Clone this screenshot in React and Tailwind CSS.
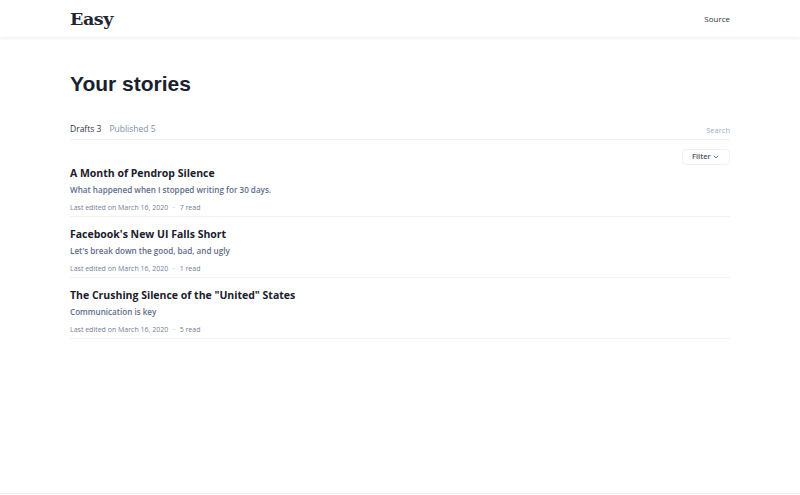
import { ChevronDown } from "lucide-react";

const stories = [
  {
    title: "A Month of Pendrop Silence",
    sub: "What happened when I stopped writing for 30 days.",
    read: "7 read",
  },
  {
    title: "Facebook's New UI Falls Short",
    sub: "Let's break down the good, bad, and ugly",
    read: "1 read",
  },
  {
    title: 'The Crushing Silence of the "United" States',
    sub: "Communication is key",
    read: "5 read",
  },
];

export default function App() {
  return (
    <div className="min-h-screen bg-white text-[#1a202c] flex flex-col font-['Open_Sans',sans-serif]">
      <header className="h-[37px] bg-white shadow-[0_1px_4px_rgba(0,0,0,0.08)]">
        <div className="max-w-[660px] mx-auto h-full flex items-center justify-between">
          <span className="font-['DejaVu_Serif',serif] font-bold text-[17.5px] tracking-tight text-[#1f2533] mt-[2px]">
            Easy
          </span>
          <a className="text-[8px] text-[#2d3748]">Source</a>
        </div>
      </header>

      <main className="flex-1 max-w-[660px] w-full mx-auto">
        <h1 className="mt-[34px] font-['Liberation_Sans',sans-serif] font-bold text-[21px] leading-[26px] text-[#1a202c]">
          Your stories
        </h1>

        <div className="mt-[26px] flex items-end justify-between border-b border-[#f2f2f2] pb-[3px]">
          <div className="flex gap-[8px] text-[8.5px]">
            <span className="text-[#2d3748]">Drafts 3</span>
            <span className="text-[#8090a8]">Published 5</span>
          </div>
          <span className="text-[7.5px] text-[#a0aec0]">Search</span>
        </div>

        <div className="flex justify-end mt-[9px]">
          <button className="h-[16px] w-[48px] px-[9px] flex items-center justify-between border border-[#edf2f7] rounded text-[7.5px] font-semibold text-[#4a5568]">
            Filter
            <ChevronDown size={8} strokeWidth={2.5} />
          </button>
        </div>

        <div className="-mt-[9px]">
          {stories.map((s) => (
            <div key={s.title} className="border-b border-[#f2f2f2] pt-[9px] pb-[3px]">
              <div className="text-[10.5px] font-bold leading-[16px] text-[#1a202c]">{s.title}</div>
              <div className="mt-[3px] text-[8.1px] leading-[12px] font-semibold text-[#5f6d8c]">{s.sub}</div>
              <div className="mt-[6px] text-[7px] leading-[11px] text-[#718096]">
                Last edited on March 16, 2020 <span className="mx-[3px]">·</span> {s.read}
              </div>
            </div>
          ))}
        </div>
      </main>

      <div className="h-[2px] border-t border-[#eeeeee]" />
    </div>
  );
}
